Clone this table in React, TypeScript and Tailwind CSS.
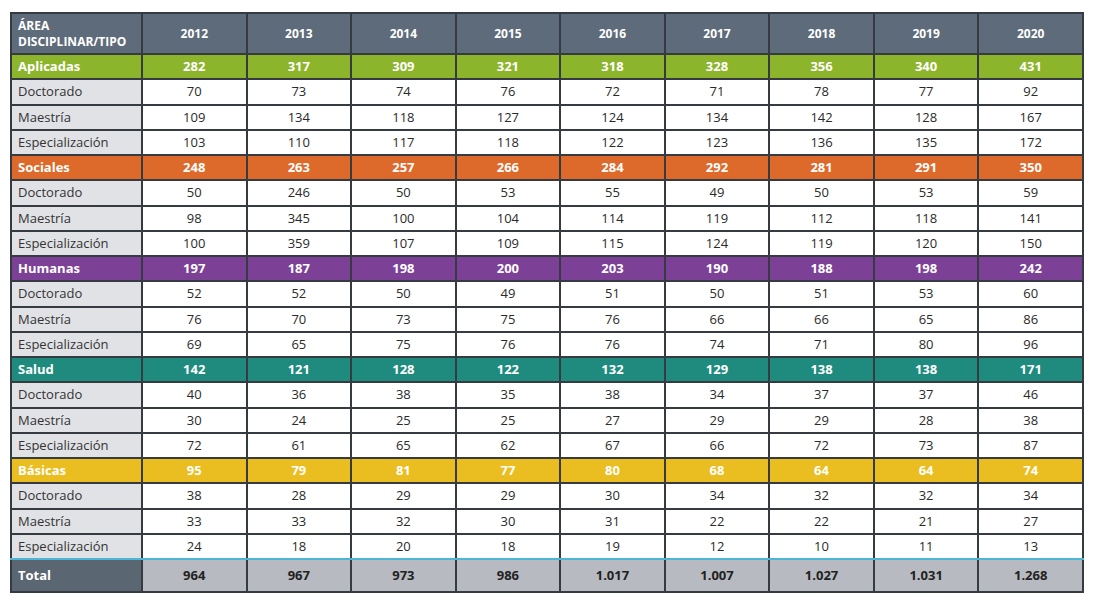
const years = ["2012", "2013", "2014", "2015", "2016", "2017", "2018", "2019", "2020"];

type Group = { name: string; color: string; totals: string[]; rows: [string, string[]][] };

const groups: Group[] = [
  {
    name: "Aplicadas",
    color: "bg-[#8db52c]",
    totals: ["282", "317", "309", "321", "318", "328", "356", "340", "431"],
    rows: [
      ["Doctorado", ["70", "73", "74", "76", "72", "71", "78", "77", "92"]],
      ["Maestría", ["109", "134", "118", "127", "124", "134", "142", "128", "167"]],
      ["Especialización", ["103", "110", "117", "118", "122", "123", "136", "135", "172"]],
    ],
  },
  {
    name: "Sociales",
    color: "bg-[#dd692b]",
    totals: ["248", "263", "257", "266", "284", "292", "281", "291", "350"],
    rows: [
      ["Doctorado", ["50", "246", "50", "53", "55", "49", "50", "53", "59"]],
      ["Maestría", ["98", "345", "100", "104", "114", "119", "112", "118", "141"]],
      ["Especialización", ["100", "359", "107", "109", "115", "124", "119", "120", "150"]],
    ],
  },
  {
    name: "Humanas",
    color: "bg-[#7c4097]",
    totals: ["197", "187", "198", "200", "203", "190", "188", "198", "242"],
    rows: [
      ["Doctorado", ["52", "52", "50", "49", "51", "50", "51", "53", "60"]],
      ["Maestría", ["76", "70", "73", "75", "76", "66", "66", "65", "86"]],
      ["Especialización", ["69", "65", "75", "76", "76", "74", "71", "80", "96"]],
    ],
  },
  {
    name: "Salud",
    color: "bg-[#1f8a7e]",
    totals: ["142", "121", "128", "122", "132", "129", "138", "138", "171"],
    rows: [
      ["Doctorado", ["40", "36", "38", "35", "38", "34", "37", "37", "46"]],
      ["Maestría", ["30", "24", "25", "25", "27", "29", "29", "28", "38"]],
      ["Especialización", ["72", "61", "65", "62", "67", "66", "72", "73", "87"]],
    ],
  },
  {
    name: "Básicas",
    color: "bg-[#eabd20]",
    totals: ["95", "79", "81", "77", "80", "68", "64", "64", "74"],
    rows: [
      ["Doctorado", ["38", "28", "29", "29", "30", "34", "32", "32", "34"]],
      ["Maestría", ["33", "33", "32", "30", "31", "22", "22", "21", "27"]],
      ["Especialización", ["24", "18", "20", "18", "19", "12", "10", "11", "13"]],
    ],
  },
];

const totals = ["964", "967", "973", "986", "1.017", "1.007", "1.027", "1.031", "1.268"];

const cell = "border-2 border-[#353b40] text-center";

export default function App() {
  return (
    <div className="w-[1094px] h-[602px] bg-white pt-[12px] pl-[10px]" style={{ fontFamily: "'Open Sans', 'Liberation Sans', sans-serif" }}>
      <table className="border-collapse table-fixed w-[1074px] text-[13px] text-[#2a2a2a]">
        <colgroup>
          <col className="w-[131px]" />
          {years.map(y => <col key={y} />)}
        </colgroup>
        <thead>
          <tr className="h-[41px] bg-[#5e6b7a] text-white font-bold text-[12px]">
            <th className="border-2 border-[#353b40] text-left pl-[6px] leading-[16px]">ÁREA<br />DISCIPLINAR/TIPO</th>
            {years.map(y => <th key={y} className={cell}>{y}</th>)}
          </tr>
        </thead>
        <tbody>
          {groups.map(g => (
            <>
              <tr key={g.name} className={`h-[25.25px] ${g.color} text-white font-bold`}>
                <td className="border-2 border-[#353b40] pl-[6px] leading-none">{g.name}</td>
                {g.totals.map((v, i) => <td key={i} className={`${cell} leading-none`}>{v}</td>)}
              </tr>
              {g.rows.map(([label, vals], ri) => (
                <tr key={g.name + label} className="h-[25.25px] bg-white">
                  <td className={`border-2 border-[#353b40] bg-[#e1e2e6] pl-[6px] leading-none text-[#333] ${g.name === "Básicas" && ri === 2 ? "border-b-[#4cb6d6]" : ""}`}>{label}</td>
                  {vals.map((v, i) => (
                    <td key={i} className={`${cell} leading-none ${g.name === "Básicas" && ri === 2 ? "border-b-[#4cb6d6]" : ""}`}>{v}</td>
                  ))}
                </tr>
              ))}
            </>
          ))}
          <tr className="h-[33px] bg-[#b7bac0] font-bold text-[#222]">
            <td className="border-2 border-[#353b40] border-t-[#4cb6d6] bg-[#5a6671] text-white pl-[6px]">Total</td>
            {totals.map((v, i) => <td key={i} className={`${cell} border-t-[#4cb6d6]`}>{v}</td>)}
          </tr>
        </tbody>
      </table>
    </div>
  );
}
